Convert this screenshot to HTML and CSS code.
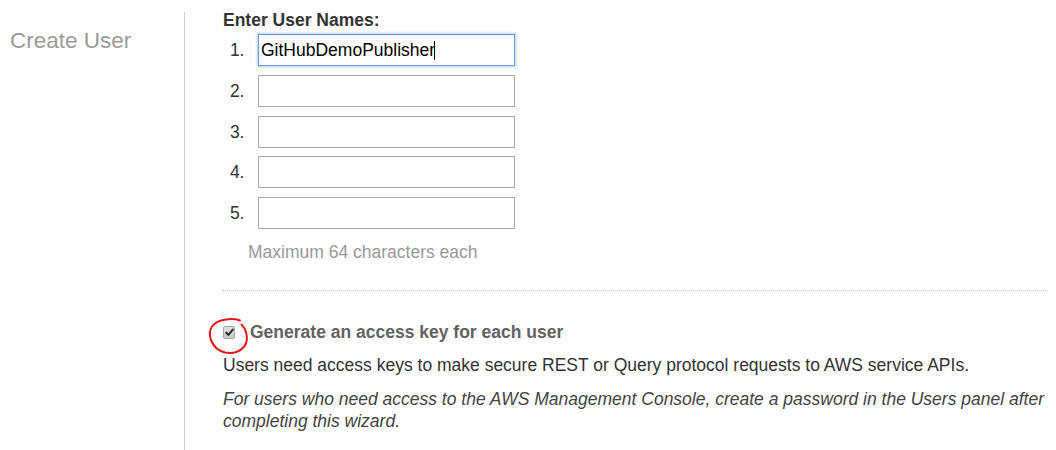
FILE: index.html
```html
<!DOCTYPE html>
<html>
<head>
<meta charset="utf-8">
<link rel="stylesheet" href="styles.css">
</head>
<body>
<div class="page">
  <div class="sidebar">
    <h1 class="title">Create User</h1>
  </div>
  <div class="main">
    <div class="heading">Enter User Names:</div>
    <div class="rows">
      <div class="row"><span class="num">1.</span><input class="field focused" type="text" value="GitHubDemoPublisher"><span class="caret"></span></div>
      <div class="row"><span class="num">2.</span><input class="field" type="text"></div>
      <div class="row"><span class="num">3.</span><input class="field" type="text"></div>
      <div class="row"><span class="num">4.</span><input class="field" type="text"></div>
      <div class="row"><span class="num">5.</span><input class="field" type="text"></div>
    </div>
    <div class="hint">Maximum 64 characters each</div>
    <div class="divider"></div>
    <div class="check-row">
      <span class="checkbox"><svg width="10" height="10" viewBox="0 0 10 10"><path d="M1.5 5.2 L3.8 7.6 L8.6 1.8" fill="none" stroke="#2a2a2a" stroke-width="2.3" stroke-linecap="round" stroke-linejoin="round"/></svg></span>
      <span class="check-label">Generate an access key for each user</span>
      <svg class="annot" width="44" height="40" viewBox="0 0 44 40"><path d="M33 3.5 C26 1, 11 1.5, 5 9.5 C0 17, 4 32, 18 35.5 C32 38, 41 29.5, 39.8 19 C39.2 13, 37 10, 34.5 7.5" fill="none" stroke="#e3161c" stroke-width="2" stroke-linecap="round"/></svg>
    </div>
    <p class="desc">Users need access keys to make secure REST or Query protocol requests to AWS service APIs.</p>
    <p class="note">For users who need access to the AWS Management Console, create a password in the Users panel after completing this wizard.</p>
  </div>
</div>
</body>
</html>
```
FILE: styles.css
```css
html, body {
  margin: 0;
  padding: 0;
  background: #fff;
}
body {
  font-family: "Liberation Sans", Arial, sans-serif;
  font-size: 17.5px;
  color: #333;
  width: 1056px;
  height: 450px;
  overflow: hidden;
}
.page {
  display: flex;
  padding-top: 12px;
  height: 438px;
}
.sidebar {
  width: 184px;
  border-right: 1px solid #cfcfcf;
  padding-top: 16px;
  box-sizing: content-box;
}
.title {
  margin: 0 0 0 10px;
  font-size: 22.5px;
  line-height: 25px;
  font-weight: normal;
  color: #9a9a9a;
}
.main {
  flex: 1;
  padding-left: 38px;
  padding-right: 8px;
}
.heading {
  font-weight: bold;
  line-height: 17px;
  color: #333;
}
.rows {
  display: flex;
  flex-direction: column;
  gap: 8.75px;
  margin-top: 5px;
}
.row {
  position: relative;
  display: flex;
  align-items: center;
}
.num {
  width: 21.5px;
  text-align: right;
  color: #333;
  line-height: 20px;
}
.field {
  box-sizing: border-box;
  width: 257px;
  height: 32px;
  margin: 0 0 0 13.5px;
  border: 1px solid #aaa;
  border-radius: 0;
  padding: 0 2px;
  font-family: "Liberation Sans", Arial, sans-serif;
  font-size: 17.5px;
  color: #000;
  background: #fff;
  outline: none;
}
.field.focused {
  border-color: #6f9ee0;
  box-shadow: 0 0 2px 1px rgba(110, 160, 235, 0.55);
}
.caret {
  position: absolute;
  left: 211px;
  top: 7px;
  width: 1px;
  height: 19px;
  background: #000;
}
.hint {
  margin: 13px 0 0 25px;
  line-height: 20px;
  color: #999;
}
.divider {
  margin: 28px 0 0 -1px;
  border-top: 1px dotted #c4c4c4;
}
.check-row {
  position: relative;
  display: flex;
  align-items: center;
  margin-top: 31px;
  line-height: 20px;
}
.checkbox {
  display: flex;
  align-items: center;
  justify-content: center;
  box-sizing: border-box;
  width: 12px;
  height: 13px;
  border: 1px solid #a4a4a4;
  border-radius: 2px;
  background: linear-gradient(#e2e2e2, #c9c9c9);
}
.checkbox svg {
  width: 9px;
  height: 9px;
}
.check-label {
  margin-left: 15px;
  font-weight: bold;
  color: #626262;
}
.annot {
  position: absolute;
  left: -16px;
  top: -5px;
  overflow: visible;
}
.desc {
  margin: 13px 0 0;
  line-height: 20px;
  color: #333;
}
.note {
  margin: 13px 0 0;
  line-height: 22px;
  font-style: italic;
  color: #444;
}
```
